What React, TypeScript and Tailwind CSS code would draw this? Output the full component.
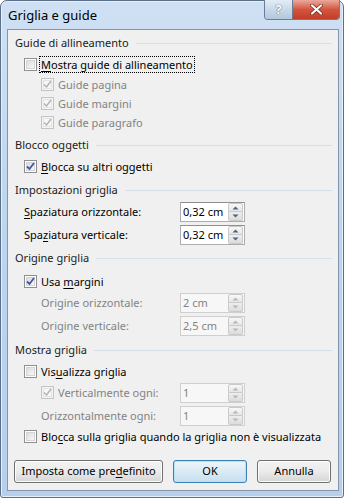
import React from 'react';

const font = { fontFamily: '"Noto Sans", "Open Sans", sans-serif' };

function Mn({ children }: { children: React.ReactNode }) {
  return <span className="underline underline-offset-2">{children}</span>;
}

function CheckBox({ checked, disabled }: { checked?: boolean; disabled?: boolean }) {
  return (
    <span
      className={
        'relative inline-flex h-[13px] w-[13px] shrink-0 items-center justify-center border ' +
        (disabled ? 'border-[#c4c4c4] bg-[#f4f4f4]' : 'border-[#8e8f8f] bg-white')
      }
    >
      <span
        className={
          'absolute inset-[1px] border ' +
          (disabled ? 'border-[#e4e4e4] bg-[#f6f6f6]' : 'border-[#d4d4d4] bg-gradient-to-br from-[#dcdcdc] to-[#f8f8f8]')
        }
      />
      {checked && (
        <svg width="9" height="9" viewBox="0 0 9 9" className="relative">
          <path
            d="M1 4.5 L3.5 7 L8 1"
            fill="none"
            stroke={disabled ? '#b0b0b0' : '#3a58a8'}
            strokeWidth={disabled ? 1.3 : 1.8}
          />
        </svg>
      )}
    </span>
  );
}

function Heading({ children }: { children: React.ReactNode }) {
  return (
    <div className="flex h-[20px] items-center pl-[7px] pr-[6px] text-[#1b1b1b]">
      <span className="whitespace-nowrap">{children}</span>
      <span className="ml-[7px] h-px flex-1 bg-[#d6e0ea]" />
    </div>
  );
}

function CheckRow({
  indent,
  checked,
  disabled,
  focus,
  h = 'h-[20px]',
  mt,
  children,
}: {
  indent: string;
  checked?: boolean;
  disabled?: boolean;
  focus?: boolean;
  h?: string;
  mt: string;
  children: React.ReactNode;
}) {
  return (
    <div className={`flex items-center ${h} ${mt} ${indent}`}>
      <CheckBox checked={checked} disabled={disabled} />
      <span
        className={
          'ml-[3px] whitespace-nowrap px-[1px] leading-[15px] ' +
          (disabled ? 'text-[#838383] ' : 'text-black ') +
          (focus ? 'outline-1 outline-dotted outline-black' : '')
        }
      >
        {children}
      </span>
    </div>
  );
}

function Spin({ disabled }: { disabled?: boolean }) {
  const arrow = disabled ? '#b8b8b8' : '#4d6185';
  return (
    <div className="ml-auto mr-[1px] flex h-[18px] w-[15px] flex-col">
      <div className="flex h-[9px] items-center justify-center rounded-t-[2px] border border-[#c9c9c9] bg-gradient-to-b from-[#f8f8f8] to-[#e6e6e6]">
        <svg width="7" height="4" viewBox="0 0 7 4">
          <path d="M0.5 3.5 L3.5 0.5 L6.5 3.5 Z" fill={arrow} />
        </svg>
      </div>
      <div className="flex h-[9px] items-center justify-center rounded-b-[2px] border border-t-0 border-[#c9c9c9] bg-gradient-to-b from-[#eeeeee] to-[#dcdcdc]">
        <svg width="7" height="4" viewBox="0 0 7 4">
          <path d="M0.5 0.5 L3.5 3.5 L6.5 0.5 Z" fill={arrow} />
        </svg>
      </div>
    </div>
  );
}

function InputRow({
  indent,
  label,
  value,
  disabled,
  checkbox,
  mt,
}: {
  indent: string;
  label: React.ReactNode;
  value: string;
  disabled?: boolean;
  checkbox?: boolean;
  mt: string;
}) {
  return (
    <div className={`flex h-[20px] items-center ${mt}`}>
      <div className={`flex w-[172px] items-center ${indent}`}>
        {checkbox && (
          <span className="mr-[4px]">
            <CheckBox checked disabled />
          </span>
        )}
        <span className={'whitespace-nowrap ' + (disabled ? 'text-[#838383]' : 'text-black')}>{label}</span>
      </div>
      <div
        className={
          'flex h-[20px] w-[65px] items-center border pl-[2px] ' +
          (disabled ? 'border-[#cfcfcf] bg-[#f7f7f7] text-[#838383]' : 'border-[#abadb3] border-t-[#8e8f8f] bg-white text-black')
        }
      >
        <span>{value}</span>
        <Spin disabled={disabled} />
      </div>
    </div>
  );
}

function Btn({ children, w, primary }: { children: React.ReactNode; w: string; primary?: boolean }) {
  return (
    <div
      className={
        `flex h-[23px] ${w} items-center justify-center rounded-[3px] border text-black ` +
        (primary
          ? 'border-[#3c7fb1] bg-gradient-to-b from-[#ecf6fc] via-[#dceaf4] to-[#c4e0f0] shadow-[inset_0_0_0_1px_#b6e1f7]'
          : 'border-[#707070] bg-gradient-to-b from-[#f3f3f3] via-[#ebebeb] to-[#d5d5d5] shadow-[inset_0_0_0_1px_#fcfcfc]')
      }
    >
      {children}
    </div>
  );
}

export default function App() {
  return (
    <div className="h-[498px] w-[346px] overflow-hidden bg-white text-[11px]" style={font}>
      <div className="flex h-full w-[344px] flex-col rounded-t-[7px] rounded-b-[3px] border border-[#5b6f86] bg-gradient-to-b from-[#cfe0f4] via-[#bcd4ef] to-[#b7cfea] shadow-[inset_0_0_0_1px_#e6f0fb]">
        {/* title bar */}
        <div className="flex h-[28px] shrink-0 items-start">
          <div className="pl-[7px] pt-[5px] text-[13px] text-black">Griglia e guide</div>
          <div className="ml-auto mr-[3px] flex h-[20px] -mt-px overflow-hidden rounded-b-[4px] border border-t-0 border-[#6a7d95]">
            <div className="flex w-[28px] items-center justify-center border-r border-[#6a7d95] bg-gradient-to-b from-[#e3ecf6] via-[#c9d9ea] to-[#b3c7dc] text-[13px] font-bold text-white [text-shadow:0_0_1px_#4d5f75,0_0_1px_#4d5f75]">
              ?
            </div>
            <div className="flex w-[46px] items-center justify-center bg-gradient-to-b from-[#e9a99c] via-[#d3553f] to-[#c43c25]">
              <svg width="13" height="11" viewBox="0 0 13 11">
                <path d="M2 1.5 L11 9.5 M11 1.5 L2 9.5" stroke="#6d2a20" strokeWidth="3.6" strokeLinecap="round" />
                <path d="M2 1.5 L11 9.5 M11 1.5 L2 9.5" stroke="#ffffff" strokeWidth="2.2" strokeLinecap="round" />
              </svg>
            </div>
          </div>
        </div>
        {/* client area */}
        <div className="ml-[6px] mr-[4px] mb-[6px] flex-1 border border-[#8596ab] bg-[#f0f0f0]">
          <div className="flex flex-col">
            <div className="mt-[3px]">
              <Heading>Guide di allineamento</Heading>
            </div>
            <CheckRow indent="pl-[16px]" mt="mt-[1px]" focus>
              <Mn>M</Mn>ostra guide di allineamento
            </CheckRow>
            <CheckRow indent="pl-[33px]" mt="mt-[1px]" h="h-[19px]" checked disabled>
              Guide pagina
            </CheckRow>
            <CheckRow indent="pl-[33px]" mt="mt-0" h="h-[19px]" checked disabled>
              Guide margini
            </CheckRow>
            <CheckRow indent="pl-[33px]" mt="mt-0" h="h-[19px]" checked disabled>
              Guide paragrafo
            </CheckRow>

            <div className="mt-[3px]">
              <Heading>Blocco oggetti</Heading>
            </div>
            <CheckRow indent="pl-[16px]" mt="mt-[1px]" checked>
              <Mn>B</Mn>locca su altri oggetti
            </CheckRow>

            <div className="mt-[4px]">
              <Heading>Impostazioni griglia</Heading>
            </div>
            <InputRow
              indent="pl-[16px]"
              mt="mt-[2px]"
              value="0,32 cm"
              label={
                <>
                  <Mn>S</Mn>paziatura orizzontale:
                </>
              }
            />
            <InputRow
              indent="pl-[16px]"
              mt="mt-[3px]"
              value="0,32 cm"
              label={
                <>
                  Spa<Mn>z</Mn>iatura verticale:
                </>
              }
            />

            <div className="mt-[3px]">
              <Heading>Origine griglia</Heading>
            </div>
            <CheckRow indent="pl-[16px]" mt="mt-[3px]" checked>
              Usa <Mn>m</Mn>argini
            </CheckRow>
            <InputRow indent="pl-[33px]" mt="mt-[2px]" value="2 cm" disabled label="Origine orizzontale:" />
            <InputRow indent="pl-[33px]" mt="mt-[3px]" value="2,5 cm" disabled label="Origine verticale:" />

            <div className="mt-[4px]">
              <Heading>Mostra griglia</Heading>
            </div>
            <CheckRow indent="pl-[16px]" mt="mt-[1px]">
              Vis<Mn>u</Mn>alizza griglia
            </CheckRow>
            <InputRow indent="pl-[33px]" mt="mt-[2px]" value="1" disabled checkbox label="Verticalmente ogni:" />
            <InputRow indent="pl-[33px]" mt="mt-[3px]" value="1" disabled label="Orizzontalmente ogni:" />
            <CheckRow indent="pl-[16px]" mt="mt-0">
              Blo<Mn>c</Mn>ca sulla griglia quando la griglia non è visualizzata
            </CheckRow>

            <div className="mt-[14px] flex items-center px-[6px]">
              <Btn w="w-[149px]">
                Imposta come pre<Mn>d</Mn>efinito
              </Btn>
              <div className="ml-[10px]">
                <Btn w="w-[74px]" primary>
                  OK
                </Btn>
              </div>
              <div className="ml-[10px]">
                <Btn w="w-[74px]">Annulla</Btn>
              </div>
            </div>
          </div>
        </div>
      </div>
    </div>
  );
}
